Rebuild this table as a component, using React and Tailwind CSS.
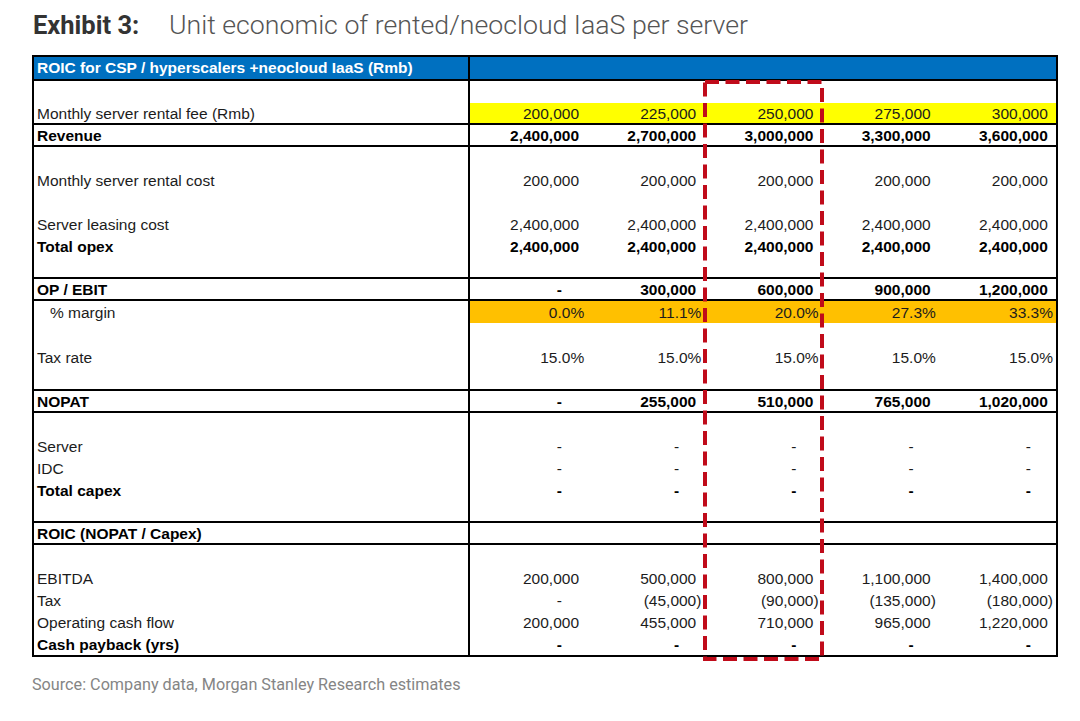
import React from "react";

const D = "-";
const rows = [
  { h: 22 },
  { label: "Monthly server rental fee (Rmb)", vals: ["200,000", "225,000", "250,000", "275,000", "300,000"], bg: "bg-[#ffff00]", border: true },
  { label: "Revenue", bold: true, vals: ["2,400,000", "2,700,000", "3,000,000", "3,300,000", "3,600,000"], border: true },
  {},
  { label: "Monthly server rental cost", vals: ["200,000", "200,000", "200,000", "200,000", "200,000"] },
  {},
  { label: "Server leasing cost", vals: ["2,400,000", "2,400,000", "2,400,000", "2,400,000", "2,400,000"] },
  { label: "Total opex", bold: true, vals: ["2,400,000", "2,400,000", "2,400,000", "2,400,000", "2,400,000"] },
  { border: true },
  { label: "OP / EBIT", bold: true, vals: [D, "300,000", "600,000", "900,000", "1,200,000"], border: true },
  { label: "% margin", indent: true, vals: ["0.0%", "11.1%", "20.0%", "27.3%", "33.3%"], bg: "bg-[#ffc000]" },
  { h: 23 },
  { label: "Tax rate", vals: ["15.0%", "15.0%", "15.0%", "15.0%", "15.0%"] },
  { h: 23, border: true },
  { label: "NOPAT", bold: true, vals: [D, "255,000", "510,000", "765,000", "1,020,000"], border: true },
  {},
  { label: "Server", vals: [D, D, D, D, D] },
  { label: "IDC", vals: [D, D, D, D, D] },
  { label: "Total capex", bold: true, vals: [D, D, D, D, D] },
  { border: true },
  { label: "ROIC (NOPAT / Capex)", bold: true, border: true },
  {},
  { label: "EBITDA", vals: ["200,000", "500,000", "800,000", "1,100,000", "1,400,000"] },
  { label: "Tax", vals: [D, "(45,000)", "(90,000)", "(135,000)", "(180,000)"] },
  { label: "Operating cash flow", vals: ["200,000", "455,000", "710,000", "965,000", "1,220,000"] },
  { label: "Cash payback (yrs)", bold: true, vals: [D, D, D, D, D] },
];

function Val({ v }) {
  if (v === D) {
    return (
      <span className="flex">
        <span>-</span>
        <span className="w-[17px]" />
        <span className="invisible">)</span>
      </span>
    );
  }
  if (v.endsWith("%") || v.endsWith(")")) return <span>{v}</span>;
  return (
    <span>
      {v}
      <span className="invisible">)</span>
    </span>
  );
}

function Row({ r }) {
  const h = r.h === 23 ? "h-[23px]" : "h-[22px]";
  return (
    <div className={`flex ${h} ${r.border ? "border-b-2 border-black" : ""}`}>
      <div
        className={`w-[436px] shrink-0 border-r-2 border-black flex items-center pt-[2px] ${r.indent ? "pl-[16px]" : "pl-[3px]"} ${r.bold ? "font-bold text-black" : "text-[#1c1c1c]"}`}
      >
        {r.label || ""}
      </div>
      <div className={`flex flex-1 ${r.bg || ""}`}>
        {[0, 1, 2, 3, 4].map((i) => (
          <div
            key={i}
            className={`flex-1 flex items-center justify-end pt-[2px] pr-[3px] ${r.bold ? "font-bold text-black" : "text-[#1c1c1c]"}`}
          >
            {r.vals ? <Val v={r.vals[i]} /> : null}
          </div>
        ))}
      </div>
    </div>
  );
}

export default function App() {
  return (
    <div className="w-[1080px] h-[721px] bg-white overflow-hidden">
      <div className="h-[55px] pl-[33px] pt-[9px] flex items-baseline font-['Roboto',sans-serif] leading-[32px]">
        <span className="w-[136px] text-[25.5px] font-bold text-[#333333]">Exhibit 3:</span>
        <span className="text-[26.7px] font-light text-[#555555]">Unit economic of rented/neocloud IaaS per server</span>
      </div>
      <div className="ml-[32px] w-[1026px] border-2 border-black relative font-['Liberation_Sans',Arial,sans-serif] text-[15.5px] leading-none">
        <div className="flex h-[24px] bg-[#0070c0] border-b-2 border-black">
          <div className="w-[436px] shrink-0 border-r-2 border-black flex items-center pl-[3px] font-bold text-white">
            ROIC for CSP / hyperscalers +neocloud IaaS (Rmb)
          </div>
          <div className="flex-1" />
        </div>
        {rows.map((r, i) => (
          <Row key={i} r={r} />
        ))}
        <svg className="absolute left-[669px] top-[23px]" width="121" height="581" viewBox="0 0 121 581">
          <rect x="2" y="2" width="117" height="577" fill="none" stroke="#c00b1a" strokeWidth="4" strokeDasharray="14 6.5" />
        </svg>
      </div>
      <div className="mt-[18px] pl-[32px] font-['Roboto',sans-serif] text-[16.2px] leading-[20px] text-[#858585]">
        Source: Company data, Morgan Stanley Research estimates
      </div>
    </div>
  );
}
